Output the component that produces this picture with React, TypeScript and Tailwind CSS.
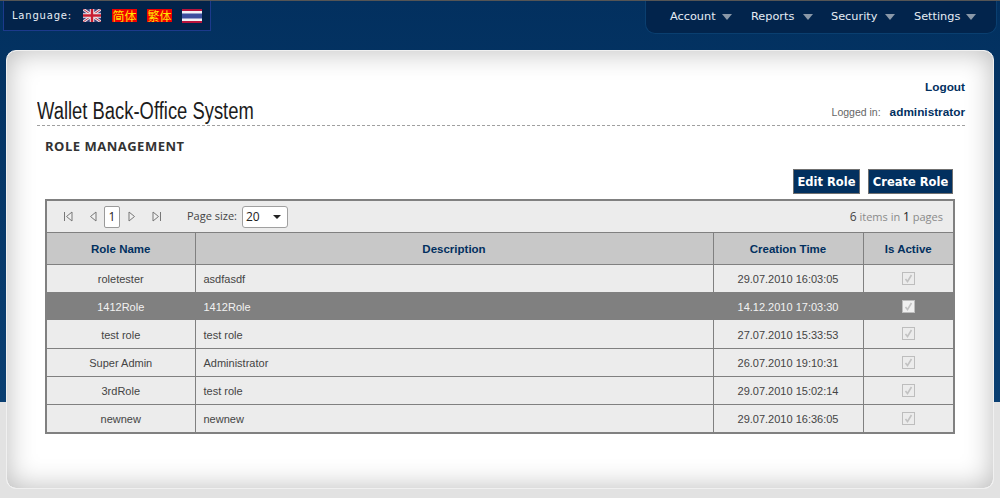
const rows = [
  { name: "roletester", description: "asdfasdf", created: "29.07.2010 16:03:05" },
  { name: "1412Role", description: "1412Role", created: "14.12.2010 17:03:30", selected: true },
  { name: "test role", description: "test role", created: "27.07.2010 15:33:53" },
  { name: "Super Admin", description: "Administrator", created: "26.07.2010 19:10:31" },
  { name: "3rdRole", description: "test role", created: "29.07.2010 15:02:14" },
  { name: "newnew", description: "newnew", created: "29.07.2010 16:36:05" },
];

const menu = [
  { label: "Account", item: "w-[81px]", text: "w-[52px]" },
  { label: "Reports", item: "w-[80px]", text: "w-[52px]" },
  { label: "Security", item: "w-[83px]", text: "w-[54px]" },
  { label: "Settings", item: "w-[62px]", text: "w-[53px]" },
];

function UkFlag() {
  return (
    <svg width="18" height="13" viewBox="0 0 18 13">
      <rect width="18" height="13" fill="#3a3f78" />
      <path d="M0 0 18 13M18 0 0 13" stroke="#e8e0e4" strokeWidth="3" />
      <path d="M0 0 18 13M18 0 0 13" stroke="#c4384a" strokeWidth="1" />
      <path d="M9 0V13M0 6.5H18" stroke="#f0ecec" strokeWidth="4.5" />
      <path d="M9 0V13M0 6.5H18" stroke="#c81e30" strokeWidth="2.5" />
    </svg>
  );
}

function ThaiFlag() {
  return (
    <svg width="20" height="14" viewBox="0 0 20 14">
      <rect width="20" height="14" fill="#b8143c" />
      <rect y="2" width="20" height="10" fill="#f2f2f6" />
      <rect y="4.5" width="20" height="5" fill="#3d4f9e" />
    </svg>
  );
}

function ChineseFlag({ label }: { label: string }) {
  return (
    <span className="flex h-[13px] w-[25px] items-center justify-center bg-[#f00000] font-['Noto_Sans_CJK_SC',sans-serif] text-[12px] leading-[13px] text-[#ffe600]">
      {label}
    </span>
  );
}

function PagerArrow({ d }: { d: string }) {
  return (
    <svg width="10" height="11" viewBox="0 0 10 11" fill="#f0f0f0" stroke="#777777">
      <path d={d} />
    </svg>
  );
}

function RowCheck({ selected }: { selected?: boolean }) {
  return (
    <span
      className={`mx-auto flex h-[13px] w-[13px] items-center justify-center border border-[#bdbdbd] ${
        selected ? "bg-[#f0f0f0]" : "bg-[#ececec]"
      }`}
    >
      <svg width="9" height="9" viewBox="0 0 9 9" fill="none" stroke="#c2c2c2" strokeWidth="1.6">
        <path d="M1.5 5 3.5 7.5 7.5 1" />
      </svg>
    </span>
  );
}

export default function App() {
  return (
    <div className="flex h-[498px] w-[1000px] flex-col overflow-hidden border-t border-[#555555] bg-[linear-gradient(to_bottom,#02305f_0,#0a3f72_401px,#e2e2e2_401px)] font-['Liberation_Sans',sans-serif]">
      <header className="flex h-[49px] items-start justify-between px-[3px]">
        <div className="flex h-[30px] w-[208px] items-center border-x border-b border-[#1c3a8c] bg-[#03234a] pl-[8px]">
          <span className="w-[71px] font-['DejaVu_Sans',sans-serif] text-[10px] tracking-[0.8px] text-[#e8eef5]">
            Language:
          </span>
          <UkFlag />
          <span className="ml-[11px]">
            <ChineseFlag label="简体" />
          </span>
          <span className="ml-[10px]">
            <ChineseFlag label="繁体" />
          </span>
          <span className="ml-[10px]">
            <ThaiFlag />
          </span>
        </div>
        <nav className="flex h-[33px] w-[352px] items-center rounded-b-[10px] border-x border-b border-[#0a3f70] bg-[#02244c] pl-[24px]">
          {menu.map((entry) => (
            <span key={entry.label} className={`flex items-center ${entry.item}`}>
              <span className={`font-['DejaVu_Sans',sans-serif] text-[11.3px] text-[#e6edf5] ${entry.text}`}>
                {entry.label}
              </span>
              <span className="h-0 w-0 border-x-[5px] border-t-[6px] border-x-transparent border-t-[#8a98a8]" />
            </span>
          ))}
        </nav>
      </header>

      <main className="mx-[6px] flex h-[439px] flex-col rounded-[10px] border border-[#f0f0f0] bg-white pl-[30px] pr-[28px] shadow-[inset_0_0_28px_rgba(0,0,0,0.28)]">
        <div className="flex h-[75px] items-end justify-between border-b border-dashed border-[#a0a0a0]">
          <h1 className="origin-left scale-x-[0.8] whitespace-nowrap text-[23px] leading-[28px] text-[#1c1c1c]">
            Wallet Back-Office System
          </h1>
          <div className="flex flex-col items-end pb-[6px]">
            <a className="mb-[12px] text-[11.8px] font-bold leading-[13px] text-[#02305f]">Logout</a>
            <div className="flex items-baseline gap-[9px] leading-[13px]">
              <span className="text-[10.5px] text-[#666666]">Logged in:</span>
              <span className="text-[11.8px] font-bold text-[#02305f]">administrator</span>
            </div>
          </div>
        </div>

        <h2 className="mt-[11px] pl-[8px] font-['Open_Sans',sans-serif] text-[13px] font-bold leading-[18px] tracking-[0.5px] text-[#333333]">
          ROLE MANAGEMENT
        </h2>

        <div className="mt-[14px] flex justify-end gap-[8px] pr-[12px]">
          <button className="h-[25px] w-[67px] border border-[#707070] bg-[#02305f] pt-[3px] font-['DejaVu_Sans',sans-serif] text-[11.5px] font-bold text-white">
            Edit Role
          </button>
          <button className="h-[25px] w-[85px] border border-[#707070] bg-[#02305f] pt-[3px] font-['DejaVu_Sans',sans-serif] text-[11.5px] font-bold text-white">
            Create Role
          </button>
        </div>

        <div className="ml-[8px] mt-[5px] w-[910px] border-2 border-[#808080] bg-[#ececec] text-[11px] text-[#444444]">
          <div className="flex h-[32px] items-center justify-between border-b border-[#808080] pl-[16px] pr-[10px] font-['Open_Sans',sans-serif] text-[11px]">
            <div className="flex items-center">
              <PagerArrow d="M1.5 1V10M9 1 3.5 5.5 9 10Z" />
              <span className="ml-[15px]">
                <PagerArrow d="M8 1 2.5 5.5 8 10Z" />
              </span>
              <span className="ml-[6px] flex h-[22px] w-[16px] items-center justify-center rounded-[2px] border border-[#9a9a9a] bg-white text-[12px] text-[#222222]">
                1
              </span>
              <span className="ml-[7px]">
                <PagerArrow d="M2 1 7.5 5.5 2 10Z" />
              </span>
              <span className="ml-[15px]">
                <PagerArrow d="M1 1 6.5 5.5 1 10ZM8.5 1V10" />
              </span>
              <span className="ml-[25px]">Page size:</span>
              <span className="ml-[5px] flex h-[22px] w-[46px] items-center justify-between rounded-[3px] border border-[#a0a0a0] bg-white pl-[3px] pr-[6px] text-[12px] text-[#222222]">
                20
                <span className="h-0 w-0 border-x-[4px] border-t-[4px] border-x-transparent border-t-[#222222]" />
              </span>
            </div>
            <span className="text-[#8a8a8a]">
              <span className="text-[12px] text-[#444444]">6</span> items in{" "}
              <span className="text-[12px] text-[#222222]">1</span> pages
            </span>
          </div>

          <table className="w-[906px] table-fixed border-collapse">
            <colgroup>
              <col className="w-[148px]" />
              <col className="w-[518px]" />
              <col className="w-[150px]" />
              <col />
            </colgroup>
            <thead>
              <tr className="h-[31px] bg-[#c8c8c8] text-[11.5px] font-bold text-[#02305f]">
                <th className="border-r border-b border-[#808080] pt-[2px]">Role Name</th>
                <th className="border-r border-b border-[#808080] pt-[2px]">Description</th>
                <th className="border-r border-b border-[#808080] pt-[2px]">Creation Time</th>
                <th className="border-b border-[#808080] pt-[2px]">Is Active</th>
              </tr>
            </thead>
            <tbody>
              {rows.map((row, index) => {
                const line = index === rows.length - 1 || row.selected ? "pt-[1px]" : "border-b pt-[2px]";
                return (
                  <tr key={row.name} className={`h-[28px] ${row.selected ? "bg-[#808080] text-[#f2f2f2]" : ""}`}>
                    <td className={`border-r border-[#808080] text-center ${line}`}>{row.name}</td>
                    <td className={`border-r border-[#808080] pl-[8px] ${line}`}>{row.description}</td>
                    <td className={`border-r border-[#808080] text-center ${line}`}>{row.created}</td>
                    <td className={`border-[#808080] ${index === rows.length - 1 || row.selected ? "" : "border-b"}`}>
                      <RowCheck selected={row.selected} />
                    </td>
                  </tr>
                );
              })}
            </tbody>
          </table>
        </div>
      </main>
    </div>
  );
}
